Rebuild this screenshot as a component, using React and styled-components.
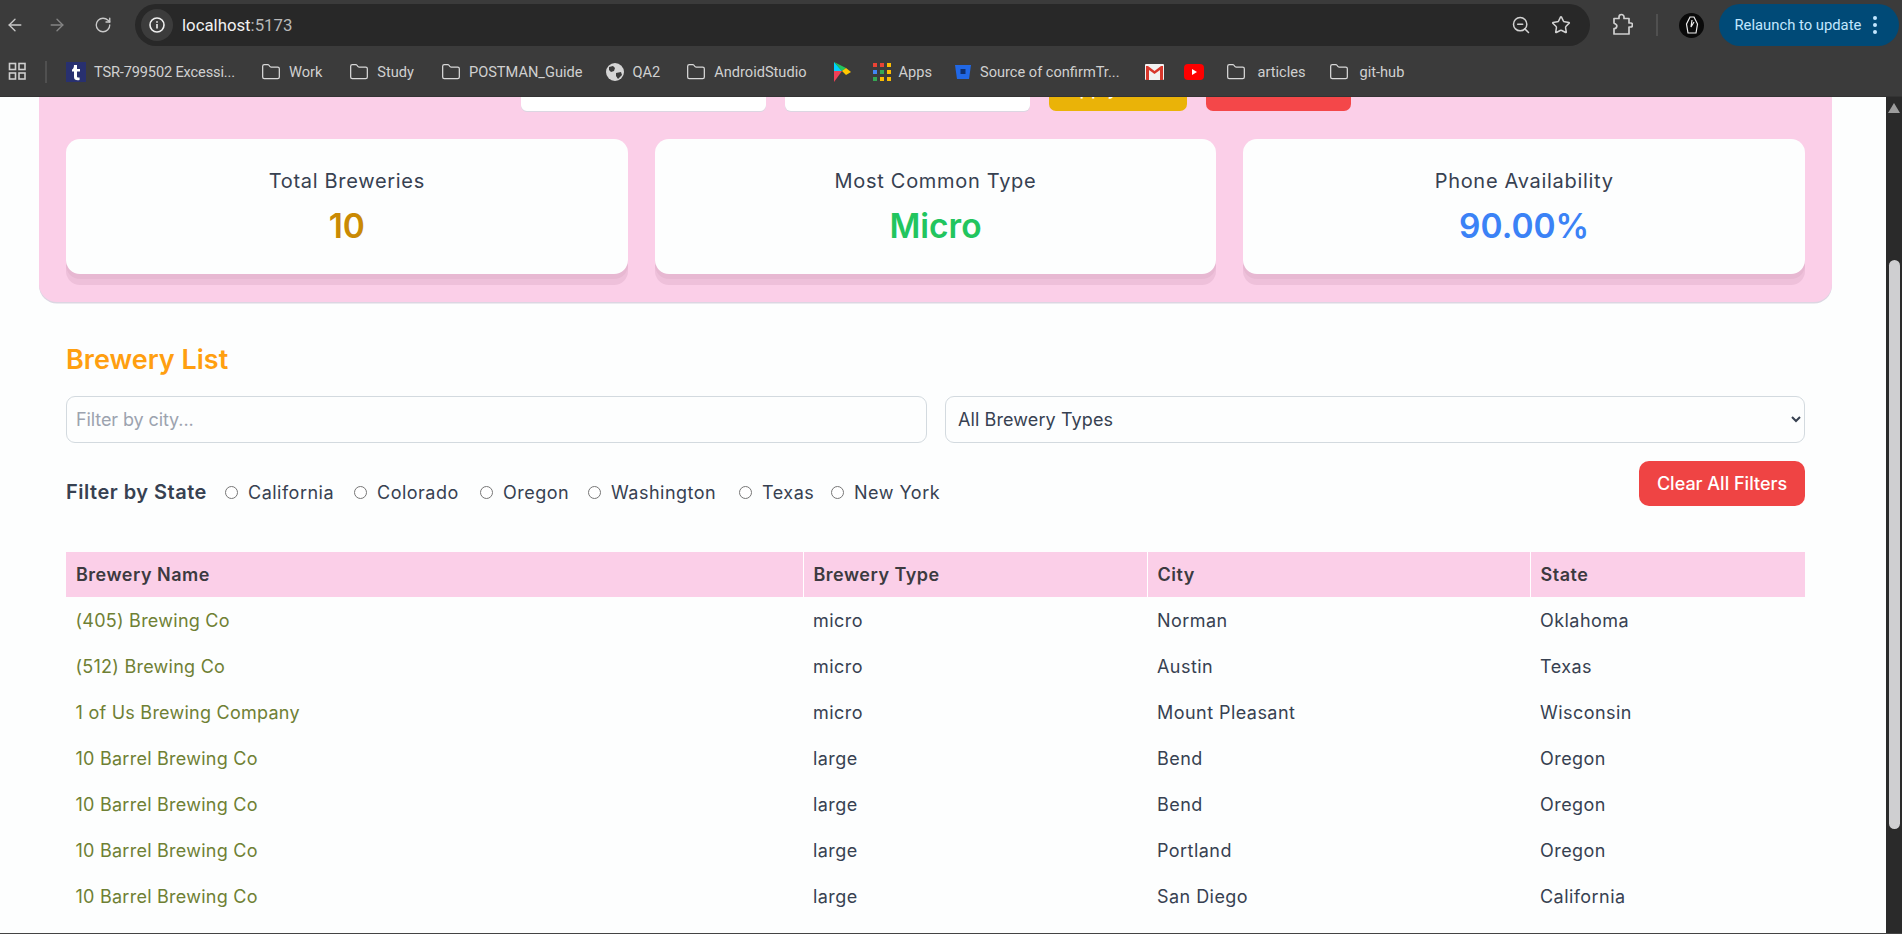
import React from "react";
import styled, { createGlobalStyle } from "styled-components";
import { ArrowLeft, ArrowRight, RotateCw, ZoomOut, Star, Folder } from "lucide-react";

const Global = createGlobalStyle`
  html, body { margin: 0; padding: 0; height: 934px; overflow: hidden; background: #fdfefe; }
  * { box-sizing: border-box; }
  body { font-family: Inter, "Liberation Sans", sans-serif; }
`;

const Frame = styled.div`
  width: 1902px; height: 934px; display: flex; flex-direction: column; overflow: hidden; background: #3b3b3b;
`;
const Toolbar = styled.header`
  height: 50px; flex: none; display: flex; align-items: center; padding: 0 4px 0 3.5px; background: #3b3b3b; color: #c7c7c7;
`;
const NavButton = styled.div`
  width: 22px; height: 22px; display: flex; align-items: center; justify-content: center; flex: none;
  margin-right: ${p => p.$mr || 0}px; color: ${p => p.$dim ? "#858585" : "#c9c9c9"};
`;
const Omnibox = styled.div`
  flex: none; width: 1455px; height: 42px; margin: 0 0 0 21px; border-radius: 21px; background: #282828;
  display: flex; align-items: center; padding: 0 18px 0 6px;
`;
const InfoBadge = styled.div`
  width: 32px; height: 32px; border-radius: 50%; background: #3c3c3c; display: flex; align-items: center; justify-content: center; flex: none;
`;
const Url = styled.div`
  margin-left: 9px; font: 400 16.8px Roboto, sans-serif; color: #f1f1f1; flex: 1;
  span { color: #b9b9b9; }
`;
const OmniIcons = styled.div`
  display: flex; gap: 20px; align-items: center; color: #d2d2d2; margin-right: 1px;
`;
const ToolRight = styled.div`
  margin: 0 0 0 21px; display: flex; align-items: center; flex: 1;
`;
const Divider = styled.div`
  width: 2px; height: 22px; background: #505050; flex: none; margin: ${p => p.$m || "0"};
`;
const Avatar = styled.div`
  width: 25px; height: 25px; border-radius: 50%; background: #0a0a0a; display: flex; align-items: center; justify-content: center; flex: none; margin-right: 14.5px;
`;
const Relaunch = styled.div`
  width: 180px; height: 42px; border-radius: 21px; background: #004a77; color: #c2e7ff;
  font: 400 14.8px Roboto, sans-serif; display: flex; align-items: center; padding-left: 16px; gap: 12px; flex: none;
`;
const Dots = styled.div`
  display: flex; flex-direction: column; gap: 3px;
  i { width: 4px; height: 4px; border-radius: 50%; background: #c2e7ff; display: block; }
`;
const Bookmarks = styled.nav`
  height: 47px; flex: none; display: flex; align-items: center; padding: 0 0 3px 8px; background: #3b3b3b;
  border-bottom: 1px solid #333;
`;
const Bookmark = styled.div`
  display: flex; align-items: center; gap: ${p => p.$gap ?? 8}px; flex: none; margin-right: ${p => p.$mr ?? 26}px;
  font: 400 14.6px Roboto, sans-serif; letter-spacing: ${p => p.$ls ?? 0}px; color: #d0d0d0; white-space: nowrap;
  svg { flex: none; }
`;
const Body = styled.div`
  flex: none; height: 836px; display: flex; background: #fdfefe;
`;
const Viewport = styled.main`
  flex: 1; min-width: 0; overflow: hidden; padding: 0 0 0 39px;
`;
const Panel = styled.section`
  width: 1793px; margin-top: -58px; padding: 27px 27px 17px; background: #fbcfe8; border-radius: 0 0 18px 18px;
  box-shadow: 0 1.5px 0 #dcd6e2;
`;
const DateRow = styled.div`
  display: flex; justify-content: center; gap: 19px; height: 45px;
`;
const DateInput = styled.div`
  width: 245px; background: #fff; border-radius: 6px; box-shadow: 0 1px 0 #dcd6e2;
`;
const PanelButton = styled.button`
  width: ${p => p.$w}px; height: 45px; border: 0; border-radius: 7px; padding: 0; background: ${p => p.$bg}; color: #fff;
  font: 500 18px Inter, sans-serif; letter-spacing: .3px;
`;
const Stats = styled.div`
  display: grid; grid-template-columns: repeat(3, 1fr); gap: 27px; margin-top: 28px;
`;
const StatCard = styled.div`
  height: 135px; margin-bottom: 11px; background: #fdfefe; border-radius: 14px; display: flex; flex-direction: column; align-items: center;
  padding-top: 28px; box-shadow: 0 5px 0 #e7b8d2, 0 11px 0 #eec0da;
`;
const StatLabel = styled.div`
  font-size: 20px; line-height: 28px; color: #374151; letter-spacing: .7px;
`;
const StatValue = styled.div`
  margin-top: 9px; font-size: 33.5px; line-height: 44px; font-weight: 600; color: ${p => p.$c};
`;
const ListSection = styled.section`
  width: 1793px; padding: 0 27px;
  margin-top: 40px;
`;
const ListTitle = styled.h2`
  margin: 0; font-size: 27px; line-height: 36px; font-weight: 600; color: #ff9f10;
`;
const FilterGrid = styled.div`
  display: grid; grid-template-columns: 861px 860px; gap: 18px; margin-top: 18px;
`;
const CityInput = styled.input`
  height: 47px; border: 1px solid #d3dadf; border-radius: 9px; padding: 0 9px; background: #fdfefe;
  font: 400 18px Inter, sans-serif; letter-spacing: -.1px; outline: none; color: #374151;
  &::placeholder { color: #9ca3af; opacity: 1; }
`;
const TypeSelect = styled.select`
  height: 47px; border: 1px solid #d3dadf; border-radius: 9px; padding: 0 8px; background: #fdfefe;
  font: 400 18px Inter, sans-serif; letter-spacing: .1px; color: #374151; outline: none;
`;
const StateRow = styled.div`
  display: flex; justify-content: space-between; align-items: flex-start; margin-top: 18px; width: 1739px;
`;
const StateGroup = styled.div`
  display: flex; align-items: center; padding-top: 18px; height: 45px;
`;
const StateTitle = styled.span`
  font-size: 20px; font-weight: 600; color: #374151; width: 158px; flex: none; margin-top: -2px; letter-spacing: .5px; white-space: nowrap;
`;
const RadioLabel = styled.label`
  display: flex; align-items: center; flex: none; width: ${p => p.$w}px; font-size: 18px; color: #374151; letter-spacing: .5px; white-space: nowrap;
  input { width: 13px; height: 13px; margin: 0 10px 0 1px; flex: none; accent-color: #666; }
`;
const ClearButton = styled.button`
  width: 166px; height: 45px; border: 0; border-radius: 10px; background: #ef4444; color: #fff;
  font: 500 18px Inter, sans-serif; padding: 0;
`;
const Table = styled.table`
  width: 1739px; margin-top: 46px; border-collapse: collapse; table-layout: fixed;
`;
const Th = styled.th`
  height: 45px; padding: 0 10px; text-align: left; font-size: 18px; font-weight: 600; color: #3c3a40; background: #fbcfe8;
  border-right: 1px solid #fff; letter-spacing: .5px;
  &:last-child { border-right: 0; }
`;
const Td = styled.td`
  height: 46px; padding: 0 10px; font-size: 18px; color: #374151; letter-spacing: .45px; white-space: nowrap;
`;
const NameCell = styled(Td)`
  padding: 0 9.5px; color: #6f8034; letter-spacing: .25px;
`;
const Scrollbar = styled.aside`
  width: 16px; flex: none; background: #2a2a2a; display: flex; flex-direction: column; align-items: center;
`;
const ScrollArrow = styled.div`
  margin-top: 6px; width: 0; height: 0; border-left: 6px solid transparent; border-right: 6px solid transparent; border-bottom: 10px solid #9c9c9c;
`;
const ScrollThumb = styled.div`
  width: 11px; height: 569px; margin-top: 147px; border-radius: 6px; background: #cfcfd1;
`;
const BottomLine = styled.div`
  height: 1px; flex: none; background: #444;
`;

const FolderIcon = () => <Folder size={20} strokeWidth={1.5} color="#d8d8d8" />;

const rows = [
  ["(405) Brewing Co", "micro", "Norman", "Oklahoma"],
  ["(512) Brewing Co", "micro", "Austin", "Texas"],
  ["1 of Us Brewing Company", "micro", "Mount Pleasant", "Wisconsin"],
  ["10 Barrel Brewing Co", "large", "Bend", "Oregon"],
  ["10 Barrel Brewing Co", "large", "Bend", "Oregon"],
  ["10 Barrel Brewing Co", "large", "Portland", "Oregon"],
  ["10 Barrel Brewing Co", "large", "San Diego", "California"],
];
const states = [["California", 129], ["Colorado", 126], ["Oregon", 108], ["Washington", 151], ["Texas", 92], ["New York", 110]];

export default function App() {
  return (
    <Frame>
      <Global />
      <Toolbar>
        <NavButton $mr={20.5}><ArrowLeft size={20} strokeWidth={1.6} /></NavButton>
        <NavButton $dim $mr={24}><ArrowRight size={20} strokeWidth={1.6} /></NavButton>
        <NavButton><RotateCw size={18} strokeWidth={1.8} /></NavButton>
        <Omnibox>
          <InfoBadge>
            <svg width="18" height="18" viewBox="0 0 18 18" fill="none" stroke="#f0f0f0" strokeWidth="1.6"><circle cx="9" cy="9" r="7" /><path d="M9 8v4.6M9 5.2v1.6" /></svg>
          </InfoBadge>
          <Url>localhost<span>:5173</span></Url>
          <OmniIcons>
            <ZoomOut size={20} strokeWidth={1.8} />
            <Star size={20} strokeWidth={1.8} />
          </OmniIcons>
        </Omnibox>
        <ToolRight>
          <svg width="22" height="24" viewBox="0 0 22 24" fill="none" stroke="#d0d0d0" strokeWidth="1.7" strokeLinejoin="round"><path d="M3 21v-5.5a2.4 2.4 0 0 0 1.500-4.500L3 10V5.500h5V4a2.500 2.500 0 0 1 5 0v1.500h5V10h1.500a2 2 0 0 1 0 4H18v7Z" /></svg>
          <Divider $m="0 21px 0 23px" />
          <Avatar>
            <svg width="14" height="20" viewBox="0 0 14 20" fill="none" stroke="#eee" strokeWidth="1.2"><path d="M3 18 1.500 9 5 2h4l3.500 7L11 18H3Z" /><path d="M7 5 6 12l3-5" /></svg>
          </Avatar>
          <Relaunch>Relaunch to update<Dots><i /><i /><i /></Dots></Relaunch>
        </ToolRight>
      </Toolbar>
      <Bookmarks>
        <Bookmark $mr={0}>
          <svg width="19" height="19" viewBox="0 0 19 19" fill="none" stroke="#cfcfcf" strokeWidth="1.6"><rect x="1.5" y="1.5" width="6" height="6" /><rect x="11" y="1.5" width="6" height="6" /><rect x="1.5" y="11" width="6" height="6" /><rect x="11" y="11" width="6" height="6" /></svg>
        </Bookmark>
        <Divider $m="0 19px 0 18px" />
        <Bookmark $ls={-0.15}>
          <svg width="20" height="20" viewBox="0 0 20 20"><rect width="20" height="20" fill="#28306f" /><path d="M8 3h3v4h3v2.400h-3v5c0 1 .8 1.300 2.600 1V18c-3.500.6-5.600-.3-5.600-3V9.400H6V7.500c1.300-.4 2-2 2-4.500Z" fill="#fff" /></svg>
          TSR-799502 Excessi...
        </Bookmark>
        <Bookmark $mr={27}><FolderIcon />Work</Bookmark>
        <Bookmark $mr={27}><FolderIcon />Study</Bookmark>
        <Bookmark $mr={23}><FolderIcon />POSTMAN_Guide</Bookmark>
        <Bookmark $gap={7}>
          <svg width="20" height="20" viewBox="0 0 20 20"><circle cx="10" cy="10" r="9" fill="#d5d5d5" /><path d="M4 5l4-1 2 2-1 3-3 1-2-2ZM11 11l5-1 1 3-4 4-2-3Z" fill="#3b3b3b" /></svg>
          QA2
        </Bookmark>
        <Bookmark><FolderIcon />AndroidStudio</Bookmark>
        <Bookmark $mr={22}>
          <svg width="18" height="22" viewBox="0 0 18 22"><path d="M1 1v10l8-1Z" fill="#00d2ff" /><path d="M1 1l8 9 4-3Z" fill="#22c55e" /><path d="M1 21V10h8Z" fill="#ef4056" /><path d="M13 7l5 4-5 3-4-4Z" fill="#ffc800" /></svg>
        </Bookmark>
        <Bookmark $mr={22}>
          <svg width="18" height="18" viewBox="0 0 18 18">
            {[["#ea4335", 0, 0], ["#ea4335", 7, 0], ["#fbbc04", 14, 0], ["#4285f4", 0, 7], ["#34a853", 7, 7], ["#fbbc04", 14, 7], ["#34a853", 0, 14], ["#fbbc04", 7, 14], ["#fbbc04", 14, 14]].map(([c, x, y], i) => <rect key={i} x={x} y={y} width="4" height="4" fill={c} />)}
          </svg>
          Apps
        </Bookmark>
        <Bookmark>
          <svg width="18" height="18" viewBox="0 0 18 18"><path d="M1 2h16l-2 14H3Z" fill="#2168e6" /><rect x="6.500" y="6" width="5" height="5" fill="#0e2f6e" /></svg>
          Source of confirmTr...
        </Bookmark>
        <Bookmark $mr={20}>
          <svg width="19" height="16" viewBox="0 0 19 16"><rect width="19" height="16" rx="1" fill="#f2f2f2" /><path d="M1 2v14h3V6l5.500 4L15 6v10h3V2h-2L9.500 7 3 2Z" fill="#d8372c" /></svg>
        </Bookmark>
        <Bookmark $mr={22}>
          <svg width="20" height="16" viewBox="0 0 20 16"><rect width="20" height="16" rx="4" fill="#f00" /><path d="M8 5l5 3-5 3Z" fill="#fff" /></svg>
        </Bookmark>
        <Bookmark $gap={11} $mr={23}><FolderIcon />articles</Bookmark>
        <Bookmark $gap={11}><FolderIcon />git-hub</Bookmark>
      </Bookmarks>
      <Body>
        <Viewport>
          <Panel>
            <DateRow>
              <DateInput />
              <DateInput />
              <PanelButton $w={138} $bg="#eab308">Apply Filter</PanelButton>
              <PanelButton $w={145} $bg="#f44749">Reset</PanelButton>
            </DateRow>
            <Stats>
              <StatCard><StatLabel>Total Breweries</StatLabel><StatValue $c="#ca8a04">10</StatValue></StatCard>
              <StatCard><StatLabel>Most Common Type</StatLabel><StatValue $c="#22c55e">Micro</StatValue></StatCard>
              <StatCard><StatLabel>Phone Availability</StatLabel><StatValue $c="#3b82f6">90.00%</StatValue></StatCard>
            </Stats>
          </Panel>
          <ListSection>
            <ListTitle>Brewery List</ListTitle>
            <FilterGrid>
              <CityInput placeholder="Filter by city..." />
              <TypeSelect defaultValue="all"><option value="all">All Brewery Types</option></TypeSelect>
            </FilterGrid>
            <StateRow>
              <StateGroup>
                <StateTitle>Filter by State</StateTitle>
                {states.map(([s, w]) => <RadioLabel key={s} $w={w}><input type="radio" name="state" />{s}</RadioLabel>)}
              </StateGroup>
              <ClearButton>Clear All Filters</ClearButton>
            </StateRow>
            <Table>
              <colgroup><col width="737" /><col width="344" /><col width="383" /><col width="275" /></colgroup>
              <thead><tr><Th>Brewery Name</Th><Th>Brewery Type</Th><Th>City</Th><Th>State</Th></tr></thead>
              <tbody>
                {rows.map((r, i) => <tr key={i}><NameCell>{r[0]}</NameCell><Td>{r[1]}</Td><Td>{r[2]}</Td><Td>{r[3]}</Td></tr>)}
              </tbody>
            </Table>
          </ListSection>
        </Viewport>
        <Scrollbar><ScrollArrow /><ScrollThumb /></Scrollbar>
      </Body>
      <BottomLine />
    </Frame>
  );
}
